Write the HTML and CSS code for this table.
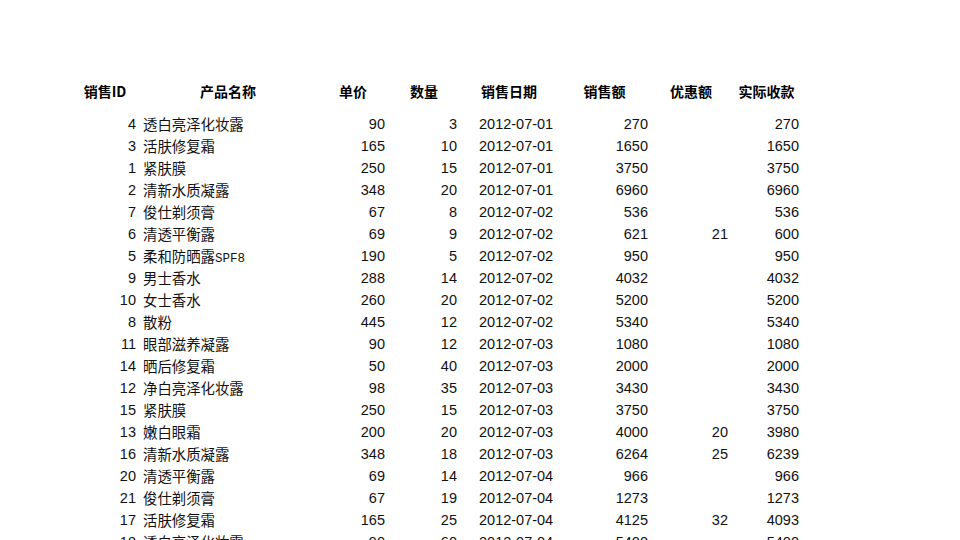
FILE: index.html
```html
<!DOCTYPE html>
<html lang="zh-CN">
<head>
<meta charset="utf-8">
<link rel="stylesheet" href="styles.css">
</head>
<body>
<div class="sheet">
  <div class="row head">
    <div>销售ID</div><div>产品名称</div><div>单价</div><div>数量</div><div>销售日期</div><div>销售额</div><div>优惠额</div><div>实际收款</div>
  </div>
  <div class="body">
    <div class="row"><div class="n">4</div><div class="t">透白亮泽化妆露</div><div class="n">90</div><div class="n">3</div><div class="d">2012-07-01</div><div class="n">270</div><div class="n"></div><div class="n">270</div></div>
    <div class="row"><div class="n">3</div><div class="t">活肤修复霜</div><div class="n">165</div><div class="n">10</div><div class="d">2012-07-01</div><div class="n">1650</div><div class="n"></div><div class="n">1650</div></div>
    <div class="row"><div class="n">1</div><div class="t">紧肤膜</div><div class="n">250</div><div class="n">15</div><div class="d">2012-07-01</div><div class="n">3750</div><div class="n"></div><div class="n">3750</div></div>
    <div class="row"><div class="n">2</div><div class="t">清新水质凝露</div><div class="n">348</div><div class="n">20</div><div class="d">2012-07-01</div><div class="n">6960</div><div class="n"></div><div class="n">6960</div></div>
    <div class="row"><div class="n">7</div><div class="t">俊仕剃须膏</div><div class="n">67</div><div class="n">8</div><div class="d">2012-07-02</div><div class="n">536</div><div class="n"></div><div class="n">536</div></div>
    <div class="row"><div class="n">6</div><div class="t">清透平衡露</div><div class="n">69</div><div class="n">9</div><div class="d">2012-07-02</div><div class="n">621</div><div class="n">21</div><div class="n">600</div></div>
    <div class="row"><div class="n">5</div><div class="t">柔和防晒露<span class="lat">SPF8</span></div><div class="n">190</div><div class="n">5</div><div class="d">2012-07-02</div><div class="n">950</div><div class="n"></div><div class="n">950</div></div>
    <div class="row"><div class="n">9</div><div class="t">男士香水</div><div class="n">288</div><div class="n">14</div><div class="d">2012-07-02</div><div class="n">4032</div><div class="n"></div><div class="n">4032</div></div>
    <div class="row"><div class="n">10</div><div class="t">女士香水</div><div class="n">260</div><div class="n">20</div><div class="d">2012-07-02</div><div class="n">5200</div><div class="n"></div><div class="n">5200</div></div>
    <div class="row"><div class="n">8</div><div class="t">散粉</div><div class="n">445</div><div class="n">12</div><div class="d">2012-07-02</div><div class="n">5340</div><div class="n"></div><div class="n">5340</div></div>
    <div class="row"><div class="n">11</div><div class="t">眼部滋养凝露</div><div class="n">90</div><div class="n">12</div><div class="d">2012-07-03</div><div class="n">1080</div><div class="n"></div><div class="n">1080</div></div>
    <div class="row"><div class="n">14</div><div class="t">晒后修复霜</div><div class="n">50</div><div class="n">40</div><div class="d">2012-07-03</div><div class="n">2000</div><div class="n"></div><div class="n">2000</div></div>
    <div class="row"><div class="n">12</div><div class="t">净白亮泽化妆露</div><div class="n">98</div><div class="n">35</div><div class="d">2012-07-03</div><div class="n">3430</div><div class="n"></div><div class="n">3430</div></div>
    <div class="row"><div class="n">15</div><div class="t">紧肤膜</div><div class="n">250</div><div class="n">15</div><div class="d">2012-07-03</div><div class="n">3750</div><div class="n"></div><div class="n">3750</div></div>
    <div class="row"><div class="n">13</div><div class="t">嫩白眼霜</div><div class="n">200</div><div class="n">20</div><div class="d">2012-07-03</div><div class="n">4000</div><div class="n">20</div><div class="n">3980</div></div>
    <div class="row"><div class="n">16</div><div class="t">清新水质凝露</div><div class="n">348</div><div class="n">18</div><div class="d">2012-07-03</div><div class="n">6264</div><div class="n">25</div><div class="n">6239</div></div>
    <div class="row"><div class="n">20</div><div class="t">清透平衡露</div><div class="n">69</div><div class="n">14</div><div class="d">2012-07-04</div><div class="n">966</div><div class="n"></div><div class="n">966</div></div>
    <div class="row"><div class="n">21</div><div class="t">俊仕剃须膏</div><div class="n">67</div><div class="n">19</div><div class="d">2012-07-04</div><div class="n">1273</div><div class="n"></div><div class="n">1273</div></div>
    <div class="row"><div class="n">17</div><div class="t">活肤修复霜</div><div class="n">165</div><div class="n">25</div><div class="d">2012-07-04</div><div class="n">4125</div><div class="n">32</div><div class="n">4093</div></div>
    <div class="row"><div class="n">18</div><div class="t">透白亮泽化妆露</div><div class="n">90</div><div class="n">60</div><div class="d">2012-07-04</div><div class="n">5400</div><div class="n"></div><div class="n">5400</div></div>
  </div>
</div>
</body>
</html>
```

FILE: styles.css
```css
html, body {
  margin: 0;
  padding: 0;
  background: #ffffff;
}

body {
  width: 960px;
  height: 540px;
  overflow: hidden;
  font-family: "Liberation Sans", "Noto Sans CJK SC", sans-serif;
  font-size: 14.5px;
  color: #111111;
}

.sheet {
  padding-top: 80px;
  padding-left: 72px;
}

.row {
  display: grid;
  grid-template-columns: 66px 180px 70px 72px 98px 93px 80px 71px;
  height: 22px;
  line-height: 22px;
  white-space: nowrap;
}

.head {
  margin-bottom: 11px;
  font-family: "Noto Sans CJK SC", sans-serif;
  font-weight: 700;
  font-size: 14px;
  text-align: center;
  color: #000000;
}

.n {
  text-align: right;
  padding-right: 3px;
}

.row .n:first-child {
  padding-right: 2px;
}

.t {
  padding-left: 5px;
  font-family: "Noto Sans CJK SC", sans-serif;
  font-size: 14.4px;
  font-weight: 400;
}

.lat {
  font-family: "Liberation Mono", monospace;
  font-size: 12.5px;
}

.d {
  padding-left: 19px;
}
```
